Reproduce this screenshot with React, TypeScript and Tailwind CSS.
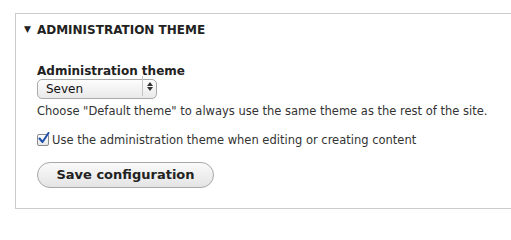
import { useState } from 'react';

const App = () => {
  const [theme, setTheme] = useState('seven');
  const [useAdmin, setUseAdmin] = useState(true);

  return (
    <div className="w-[511px] h-[211px] overflow-hidden bg-white font-['DejaVu_Sans',sans-serif] text-[#333]">
      <fieldset className="ml-[15px] mt-[13px] w-[520px] h-[196px] border border-[#ccc]">
        {/* Legend */}
        <div className="flex items-center pl-[8px] pt-[7px] text-[12px] font-bold text-[#222] uppercase">
          <span className="text-[9px] mr-[6px]">▼</span>
          <span>Administration theme</span>
        </div>

        <div className="pl-[21px] pt-[25px]">
          <label htmlFor="admin-theme" className="block text-[12px] font-bold text-[#222] leading-[14px]">
            Administration theme
          </label>
          <div className="relative mt-[-2px] w-[120px] h-[20px]">
            <select
              id="admin-theme"
              value={theme}
              onChange={(e) => setTheme(e.target.value)}
              className="appearance-none w-full h-full pl-[8px] pr-[20px] text-[12px] text-[#111] rounded-[5px] border border-[#aaa] bg-gradient-to-b from-[#fdfdfd] to-[#e9e9e9] outline-none"
            >
              <option value="seven">Seven</option>
              <option value="default">Default theme</option>
            </select>
            <div className="pointer-events-none absolute right-0 top-0 h-full w-[15px] border-l border-[#c4c4c4] flex flex-col items-center justify-center gap-[1px]">
              <svg width="6" height="4" viewBox="0 0 6 4"><path d="M3 0 L6 4 L0 4 Z" fill="#333" /></svg>
              <svg width="6" height="4" viewBox="0 0 6 4"><path d="M0 0 L6 0 L3 4 Z" fill="#333" /></svg>
            </div>
          </div>
          <p className="mt-[7px] text-[11.5px] leading-[16px] text-[#333]">
            Choose "Default theme" to always use the same theme as the rest of the site.
          </p>

          <label className="mt-[13px] flex items-center gap-[3px] text-[11.5px] text-[#333] leading-[16px]">
            <span className="relative w-[12px] h-[12px] shrink-0">
              <input
                type="checkbox"
                checked={useAdmin}
                onChange={(e) => setUseAdmin(e.target.checked)}
                className="appearance-none block w-[12px] h-[12px] m-0 rounded-[2px] border border-[#8a8a8a] bg-gradient-to-b from-[#ffffff] to-[#e8e8e8]"
              />
              {useAdmin && (
                <svg className="pointer-events-none absolute left-[1px] top-[-2px]" width="12" height="12" viewBox="0 0 12 12">
                  <path d="M1.5 6.5 L4.5 10 L10.5 1" fill="none" stroke="#1f4fa8" strokeWidth="2" strokeLinecap="round" strokeLinejoin="round" />
                </svg>
              )}
            </span>
            Use the administration theme when editing or creating content
          </label>

          <button
            type="submit"
            className="mt-[14px] w-[177px] h-[26px] rounded-full border border-[#a8a8a8] bg-gradient-to-b from-[#fafafa] to-[#e4e4e4] text-[13px] font-bold text-[#222]"
          >
            Save configuration
          </button>
        </div>
      </fieldset>
    </div>
  );
};

export default App;
